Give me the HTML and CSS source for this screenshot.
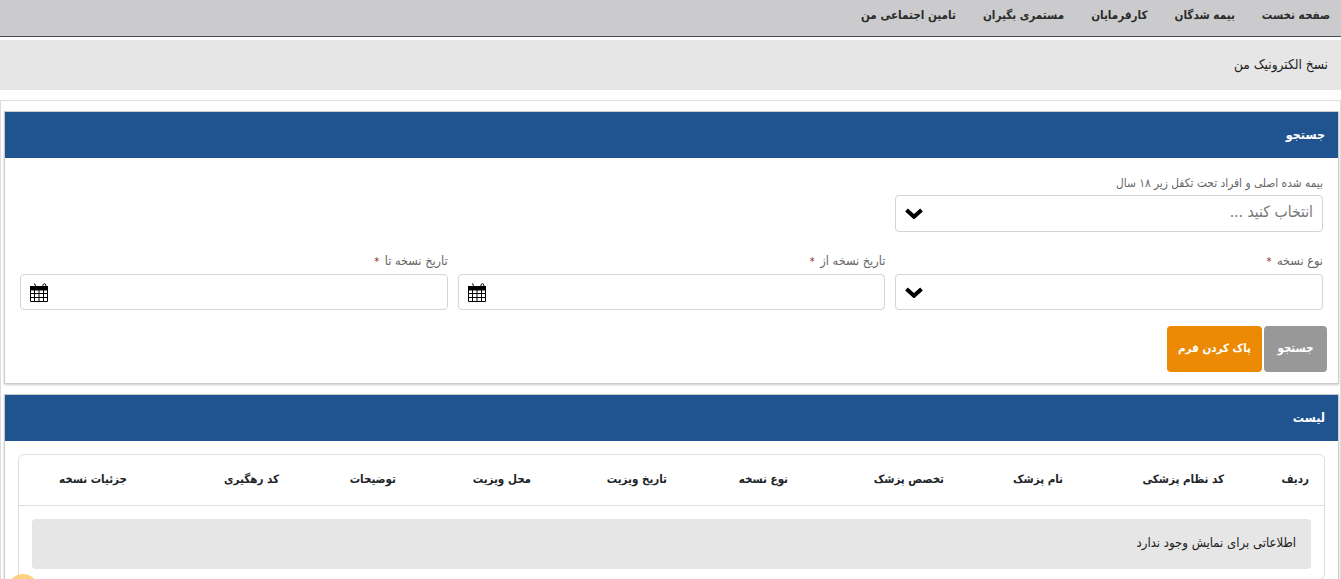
FILE: index.html
```html
<!DOCTYPE html>
<html lang="fa" dir="rtl">
<head>
<meta charset="utf-8">
<title>نسخ الکترونیک من</title>
<link rel="stylesheet" href="styles.css">
</head>
<body>
<nav class="topnav">
  <a>صفحه نخست</a>
  <a>بیمه شدگان</a>
  <a>کارفرمایان</a>
  <a>مستمری بگیران</a>
  <a>تامین اجتماعی من</a>
</nav>
<div class="crumb">نسخ الکترونیک من</div>
<main class="shell">
  <section class="panel">
    <h2 class="panel-head">جستجو</h2>
    <form class="panel-body">
      <div class="grid">
        <div class="field">
          <label class="lbl">بیمه شده اصلی و افراد تحت تکفل زیر ۱۸ سال</label>
          <div class="ctl ctl-tall">
            <span class="placeholder">انتخاب کنید ...</span>
            <svg class="chev" viewBox="0 0 18 11"><path d="M1.500 2 L9 8.800 L16.500 2" fill="none" stroke="#000" stroke-width="4"/></svg>
          </div>
        </div>
      </div>
      <div class="grid grid-2">
        <div class="field">
          <label class="lbl lbl-req">نوع نسخه <b class="req">*</b></label>
          <div class="ctl ctl-end">
            <svg class="chev" viewBox="0 0 18 11"><path d="M1.500 2 L9 8.800 L16.500 2" fill="none" stroke="#000" stroke-width="4"/></svg>
          </div>
        </div>
        <div class="field">
          <label class="lbl lbl-req">تاریخ نسخه از <b class="req">*</b></label>
          <div class="ctl ctl-end">
            <svg class="cal" viewBox="0 0 18 19"><path d="M0.5 3.5h17v15h-17z" fill="#fff" stroke="#000"/><path d="M0 3h18v4.5H0z"/><path d="M4 0.8a1.4 1.4 0 0 1 1.4 1.4v2h-1M13.9 4.2h-.9v-2a1.4 1.4 0 0 1 2.8 0v2" fill="none" stroke="#000"/><path d="M0 10.5h18M0 14.5h18M4.5 7v12M9 7v12M13.500 7v12" stroke="#000" fill="none"/></svg>
          </div>
        </div>
        <div class="field">
          <label class="lbl lbl-req">تاریخ نسخه تا <b class="req">*</b></label>
          <div class="ctl ctl-end">
            <svg class="cal" viewBox="0 0 18 19"><path d="M0.5 3.5h17v15h-17z" fill="#fff" stroke="#000"/><path d="M0 3h18v4.5H0z"/><path d="M4 0.8a1.4 1.4 0 0 1 1.4 1.4v2h-1M13.9 4.2h-.9v-2a1.4 1.4 0 0 1 2.8 0v2" fill="none" stroke="#000"/><path d="M0 10.5h18M0 14.5h18M4.5 7v12M9 7v12M13.500 7v12" stroke="#000" fill="none"/></svg>
          </div>
        </div>
      </div>
      <div class="actions">
        <button type="button" class="btn btn-grey">جستجو</button>
        <button type="button" class="btn btn-orange">پاک کردن فرم</button>
      </div>
    </form>
  </section>
  <section class="panel">
    <h2 class="panel-head">لیست</h2>
    <div class="list-body">
      <div class="tcard">
        <table class="tbl">
          <colgroup>
            <col class="c1"><col class="c2"><col class="c3"><col class="c4"><col class="c5"><col class="c6"><col class="c7"><col class="c8"><col class="c9"><col class="c10">
          </colgroup>
          <thead>
            <tr><th>ردیف</th><th>کد نظام پزشکی</th><th>نام پزشک</th><th>تخصص پزشک</th><th>نوع نسخه</th><th>تاریخ ویزیت</th><th>محل ویزیت</th><th>توضیحات</th><th>کد رهگیری</th><th>جزئیات نسخه</th></tr>
          </thead>
        </table>
        <div class="empty">اطلاعاتی برای نمایش وجود ندارد</div>
      </div>
    </div>
  </section>
</main>
<div class="floater"></div>
</body>
</html>
```
FILE: styles.css
```css
* { box-sizing: border-box; }
html, body { margin: 0; height: 579px; overflow: hidden; background: #fff; }
body { font-family: "DejaVu Sans Condensed", "DejaVu Sans", sans-serif; font-size: 12px; color: #212529; }
.topnav { display: flex; gap: 27px; height: 37px; padding: 0 11px 6px 0; align-items: center; background: #cbcbcd; border-bottom: 1px solid #4a4d55; }
.topnav a { font-weight: bold; font-size: 11.6px; color: #2b2b2b; }
.crumb { margin-top: 3px; height: 50px; display: flex; align-items: center; padding: 0 13px 3px; background: #e6e6e6; font-size: 13.6px; color: #222; }
.shell { margin-top: 10px; border: 1px solid #ddd; padding: 10px 1px 0 3px; height: 600px; }
.panel { border: 1px solid #ccc; box-shadow: 0 1px 2px #ccc; background: #fff; margin-bottom: 10px; }
.panel-head { margin: 0; height: 46px; background: #1f5490; color: #fff; font-size: 12.5px; font-weight: bold; display: flex; align-items: center; padding: 0 13px 2px; }
.panel-body { padding: 16px 15px 11px; height: 225px; }
.grid { display: grid; grid-template-columns: repeat(3, 1fr); gap: 10px; }
.grid-2 { margin-top: 20px; }
.field { display: flex; flex-direction: column; }
.lbl { font-size: 11.8px; color: #666; height: 21px; line-height: 18px; }
.lbl-req { font-size: 12.6px; height: 22px; }
.req { color: #8a2b2b; font-weight: normal; font-size: 11px; margin-right: 2px; }
.ctl { height: 36px; border: 1px solid #d4d4d4; border-radius: 4px; display: flex; align-items: center; justify-content: space-between; padding: 0 9px; background: #fff; }
.ctl-tall { height: 37px; }
.ctl-end { justify-content: flex-end; }
.placeholder { font-size: 15.6px; color: #777; padding-bottom: 3px; }
.chev { width: 18px; height: 11px; display: block; }
.cal { width: 18px; height: 19px; display: block; }
.actions { display: flex; gap: 2px; margin: 16px -4px 0 0; }
.btn { border: 0; height: 46px; border-radius: 4px; color: #fff; font-family: inherit; font-size: 11.5px; font-weight: bold; padding: 0 0 2px; }
.btn-grey { width: 63px; background: #989898; }
.btn-orange { width: 95px; background: #ed8a05; }
.list-body { padding: 13px 13px 0; }
.tcard { border: 1px solid #ddd; border-radius: 6px; padding-bottom: 10px; }
.tbl { width: 100%; table-layout: fixed; border-collapse: collapse; }
.tbl th { height: 50px; padding: 0 15px 2px 0; text-align: right; font-size: 11.5px; font-weight: bold; color: #212529; border-bottom: 1px solid #ddd; white-space: nowrap; }
.c1 { width: 85px; } .c2 { width: 161px; } .c3 { width: 119px; } .c4 { width: 156px; } .c5 { width: 121px; }
.c6 { width: 136px; } .c7 { width: 135px; } .c8 { width: 117px; } .c9 { width: 152px; }
.empty { margin: 13px 13px 0; height: 50px; background: #e6e6e6; border-radius: 4px; display: flex; align-items: center; padding: 0 15px 2px; font-size: 13px; color: #222; }
.floater { position: fixed; left: 7px; top: 574px; width: 32px; height: 32px; border-radius: 50%; background: #fcd27f; }
```
